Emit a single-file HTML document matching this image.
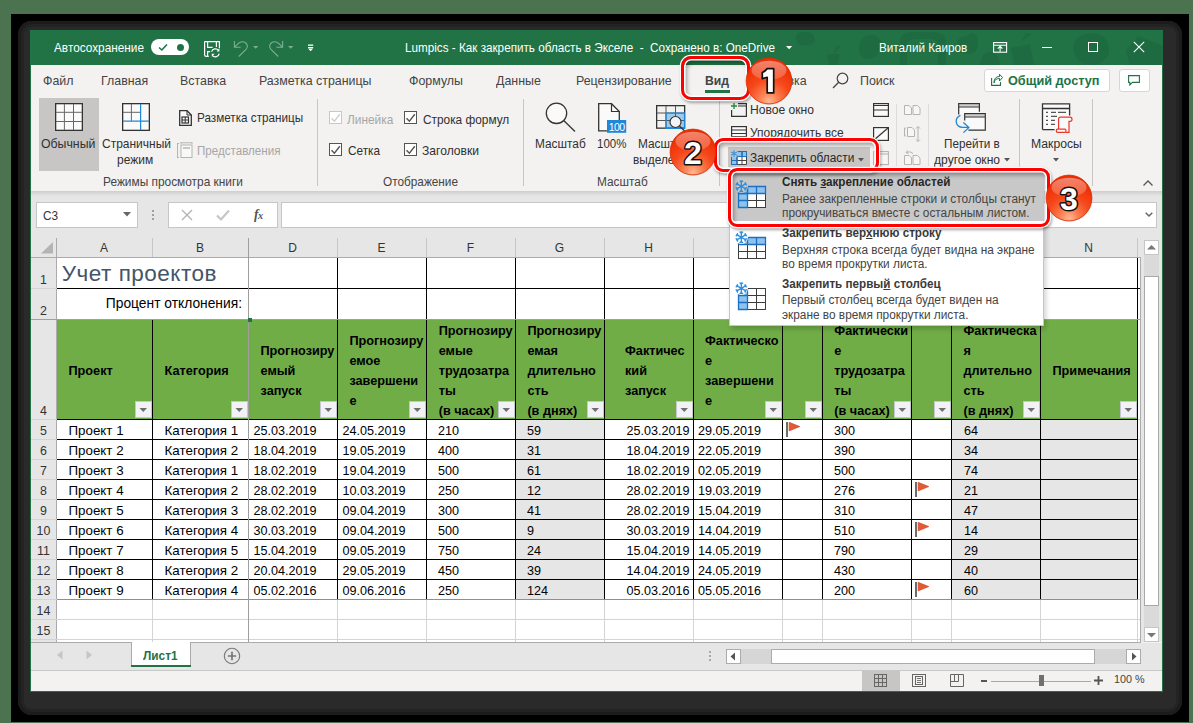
<!DOCTYPE html>
<html><head><meta charset="utf-8"><title>Excel</title>
<style>
*{margin:0;padding:0;box-sizing:border-box}
html,body{width:1193px;height:723px;overflow:hidden;background:#4b7350;font-family:"Liberation Sans",sans-serif}
.a{position:absolute}
.t{position:absolute;white-space:nowrap;line-height:1}
svg{overflow:visible}
</style></head><body>

<div class="a" style="left:11px;top:14px;width:1178px;height:708px;background:#000"></div>
<div class="a" style="left:18px;top:21px;width:1164px;height:694px;background:#2a2a2a;border-radius:14px;box-shadow:inset 0 0 0 3px #1c1c1c, inset 0 0 0 6px #232323"></div>
<div class="a" style="left:30px;top:30px;width:1133px;height:662px;background:#f3f2f1"></div>
<div class="a" style="left:30px;top:30px;width:1133px;height:35px;background:#217346"></div>
<div class="a" style="left:30px;top:65px;width:1px;height:627px;background:#217346"></div>
<div class="a" style="left:1162px;top:65px;width:1px;height:627px;background:#217346"></div>
<div class="a" style="left:30px;top:691px;width:1133px;height:1px;background:#217346"></div>
<svg class="a" style="left:780px;top:30px;" width="383" height="35" viewBox="0 0 383 35"><g fill="#1f6b41"><path d="M18 3Q30 0 34 6Q37 14 30 15Q20 17 17 12Q14 6 18 3Z"/><path d="M47 24H60L58 35H49Z M54 24L56 16L61 15" stroke="{PC}" stroke-width="1.5"/><path d="M80 12Q86 2 96 6Q104 10 100 20Q96 30 86 29Q76 26 80 12Z"/><path d="M120 35V14Q118 4 130 2H155Q168 4 166 14V35H158V14Q156 9 150 9H136Q128 9 127 14V35Z"/><path d="M186 6Q196 -1 198 10Q200 22 190 24Q178 25 177 14Q176 8 186 6Z"/><path d="M200 35Q202 22 210 22Q218 22 220 35Z"/><path d="M231 18L250 14L254 35H234Z M240 12L246 3L252 4" stroke="{PC}" stroke-width="1.5"/><path d="M300 6Q312 0 322 6Q332 14 328 26Q322 35 312 35Q300 35 295 25Q290 12 300 6Z"/><path d="M358 6L383 16V35H350L346 20Z"/></g></svg>
<div class="t" style="left:54px;top:41.81px;font-size:12.63px;color:#ffffff;transform:scaleX(0.9346);transform-origin:0 0;">Автосохранение</div>
<div class="a" style="left:151px;top:39px;width:38px;height:16px;background:#fff;border-radius:8px"></div>
<svg class="a" style="left:157px;top:42px;" width="12" height="10" viewBox="0 0 12 10"><path d="M2 5.5 L4.8 8 L10 2.5" fill="none" stroke="#217346" stroke-width="1.6"/></svg>
<div class="a" style="left:177px;top:44px;width:7px;height:7px;background:#217346;border-radius:50%"></div>
<div class="t" style="left:404.7px;top:41.90px;font-size:12.52px;color:#ffffff;transform:scaleX(0.9346);transform-origin:0 0;">Lumpics - Как закрепить область в Экселе&nbsp; -&nbsp; Сохранено в: OneDrive</div>
<div class="t" style="left:879px;top:41.90px;font-size:12.52px;color:#ffffff;transform:scaleX(0.9346);transform-origin:0 0;">Виталий Каиров</div>
<svg class="a" style="left:204px;top:41px;" width="16" height="16" viewBox="0 0 16 16"><path d="M0.6 0.6H15.4V7.2M0.6 0.6V13.8Q0.6 15.4 2.2 15.4H4.8M3.6 0.6V6.4H8.6M12.4 0.6V6M3.6 15.4V10.6H6.2" fill="none" stroke="#fff" stroke-width="1.2"/><path d="M7.6 10.6A4 4 0 0 1 14.6 9.4M15.2 12.6A4 4 0 0 1 8.4 14.6" fill="none" stroke="#fff" stroke-width="1.2"/><path d="M15.4 7.6V10.5H12.6Z M7.8 15.8V12.8H10.6Z" fill="#fff"/></svg>
<svg class="a" style="left:233px;top:40px;" width="16" height="17" viewBox="0 0 16 17"><path d="M1.4 1V7.3H7.6M1.4 7.3L4.8 3.9Q9 0 12.8 3Q15.8 6 13 9.5L5.8 16.5" fill="none" stroke="rgba(255,255,255,0.42)" stroke-width="1.1"/></svg>
<svg class="a" style="left:253px;top:46px;" width="6" height="3" viewBox="0 0 6 3"><path d="M0 0H5.4L2.7 2.8Z" fill="rgba(255,255,255,0.42)"/></svg>
<svg class="a" style="left:268px;top:40px;" width="16" height="17" viewBox="0 0 16 17"><path d="M14.6 1V7.3H8.4M14.6 7.3L11.2 3.9Q7 0 3.2 3Q0.2 6 3 9.5L10.2 16.5" fill="none" stroke="rgba(255,255,255,0.42)" stroke-width="1.1"/></svg>
<svg class="a" style="left:288px;top:46px;" width="6" height="3" viewBox="0 0 6 3"><path d="M0 0H5.4L2.7 2.8Z" fill="rgba(255,255,255,0.42)"/></svg>
<svg class="a" style="left:308px;top:44px;" width="6" height="8" viewBox="0 0 6 8"><rect x="0" y="0.5" width="5.2" height="1.3" fill="#fff"/><rect x="0" y="3" width="5.2" height="1.1" fill="#fff"/><path d="M0 4.6H5.2L2.6 7.2Z" fill="#fff"/></svg>
<svg class="a" style="left:786px;top:46px;" width="7" height="4" viewBox="0 0 7 4"><path d="M0 0H6.2L3.1 3.2Z" fill="#fff"/></svg>
<svg class="a" style="left:993px;top:41px;" width="15" height="12" viewBox="0 0 15 12"><rect x="0.6" y="1.6" width="13" height="9.6" fill="none" stroke="#fff" stroke-width="1.1"/><path d="M0.6 4.2H13.6M7.1 10.8V5.6M4.8 7.6L7.1 5.3L9.4 7.6" fill="none" stroke="#fff" stroke-width="1.1"/></svg>
<div class="a" style="left:1042px;top:47px;width:10px;height:1px;background:#fff"></div>
<div class="a" style="left:1088px;top:42px;width:10px;height:10px;border:1px solid #fff"></div>
<svg class="a" style="left:1133px;top:41px;" width="12" height="12" viewBox="0 0 12 12"><path d="M0.8 0.8L11.2 11.2M11.2 0.8L0.8 11.2" stroke="#fff" stroke-width="1.1"/></svg>
<div class="t" style="left:43.4px;top:74.07px;font-size:13.27px;color:#444;transform:scaleX(0.9346);transform-origin:0 0;">Файл</div>
<div class="t" style="left:101.2px;top:74.07px;font-size:13.27px;color:#444;transform:scaleX(0.9346);transform-origin:0 0;">Главная</div>
<div class="t" style="left:180.4px;top:74.07px;font-size:13.27px;color:#444;transform:scaleX(0.9346);transform-origin:0 0;">Вставка</div>
<div class="t" style="left:258.9px;top:74.07px;font-size:13.27px;color:#444;transform:scaleX(0.9346);transform-origin:0 0;">Разметка страницы</div>
<div class="t" style="left:408.5px;top:74.07px;font-size:13.27px;color:#444;transform:scaleX(0.9346);transform-origin:0 0;">Формулы</div>
<div class="t" style="left:496.2px;top:74.07px;font-size:13.27px;color:#444;transform:scaleX(0.9346);transform-origin:0 0;">Данные</div>
<div class="t" style="left:575.5px;top:74.07px;font-size:13.27px;color:#444;transform:scaleX(0.9346);transform-origin:0 0;">Рецензирование</div>
<div class="t" style="left:757.6px;top:74.07px;font-size:13.27px;color:#444;transform:scaleX(0.9346);transform-origin:0 0;">Справка</div>
<div class="t" style="left:860px;top:74.07px;font-size:13.27px;color:#444;transform:scaleX(0.9346);transform-origin:0 0;">Поиск</div>
<div class="t" style="left:705.4px;top:73.95px;font-size:13.05px;color:#444;font-weight:bold;transform:scaleX(0.9346);transform-origin:0 0;">Вид</div>
<div class="a" style="left:705px;top:90px;width:25px;height:3px;background:#217346"></div>
<div class="a" style="left:39px;top:98px;width:60px;height:73px;background:#c8c6c4"></div>
<div class="t" style="left:41.3px;top:137.36px;font-size:13.16px;color:#303030;transform:scaleX(0.9346);transform-origin:0 0;">Обычный</div>
<div class="t" style="left:101.7px;top:137.63px;font-size:12.84px;color:#303030;transform:scaleX(0.9346);transform-origin:0 0;">Страничный</div>
<div class="t" style="left:117.4px;top:154.43px;font-size:12.84px;color:#303030;transform:scaleX(0.9346);transform-origin:0 0;">режим</div>
<div class="t" style="left:196.5px;top:112.10px;font-size:12.52px;color:#303030;transform:scaleX(0.9346);transform-origin:0 0;">Разметка страницы</div>
<div class="t" style="left:196.5px;top:144.99px;font-size:12.41px;color:#a6a6a6;transform:scaleX(0.9346);transform-origin:0 0;">Представления</div>
<div class="t" style="left:103.4px;top:176.42px;font-size:12.73px;color:#444;transform:scaleX(0.9346);transform-origin:0 0;">Режимы просмотра книги</div>
<div class="t" style="left:347.4px;top:113.72px;font-size:12.73px;color:#a6a6a6;transform:scaleX(0.9346);transform-origin:0 0;">Линейка</div>
<div class="t" style="left:422.5px;top:113.77px;font-size:12.68px;color:#303030;transform:scaleX(0.9346);transform-origin:0 0;">Строка формул</div>
<div class="t" style="left:347.8px;top:145.01px;font-size:12.63px;color:#303030;transform:scaleX(0.9346);transform-origin:0 0;">Сетка</div>
<div class="t" style="left:422px;top:144.74px;font-size:12.95px;color:#303030;transform:scaleX(0.9346);transform-origin:0 0;">Заголовки</div>
<div class="t" style="left:382.5px;top:176.31px;font-size:12.63px;color:#444;transform:scaleX(0.9346);transform-origin:0 0;">Отображение</div>
<div class="t" style="left:534.8px;top:137.67px;font-size:12.68px;color:#303030;transform:scaleX(0.9346);transform-origin:0 0;">Масштаб</div>
<div class="t" style="left:596.5px;top:137.98px;font-size:12.31px;color:#303030;transform:scaleX(0.9346);transform-origin:0 0;">100%</div>
<div class="t" style="left:637.6px;top:137.67px;font-size:12.68px;color:#303030;transform:scaleX(0.9346);transform-origin:0 0;">Масштаб по</div>
<div class="t" style="left:633.4px;top:154.27px;font-size:12.68px;color:#303030;transform:scaleX(0.9346);transform-origin:0 0;">выделенному</div>
<div class="t" style="left:597.4px;top:176.27px;font-size:12.68px;color:#444;transform:scaleX(0.9346);transform-origin:0 0;">Масштаб</div>
<div class="t" style="left:750.4px;top:104.24px;font-size:12.95px;color:#303030;transform:scaleX(0.9346);transform-origin:0 0;">Новое окно</div>
<div class="t" style="left:750.4px;top:126.93px;font-size:12.84px;color:#303030;transform:scaleX(0.9346);transform-origin:0 0;">Упорядочить все</div>
<div class="t" style="left:944.1px;top:137.70px;font-size:12.52px;color:#303030;transform:scaleX(0.9346);transform-origin:0 0;">Перейти в</div>
<div class="t" style="left:934px;top:153.64px;font-size:12.95px;color:#303030;transform:scaleX(0.9346);transform-origin:0 0;">другое окно</div>
<div class="t" style="left:1030.6px;top:137.35px;font-size:13.05px;color:#303030;transform:scaleX(0.9346);transform-origin:0 0;">Макросы</div>
<div class="a" style="left:317px;top:99px;width:1px;height:87px;background:#c8c6c4"></div>
<div class="a" style="left:523px;top:99px;width:1px;height:87px;background:#c8c6c4"></div>
<div class="a" style="left:719px;top:99px;width:1px;height:87px;background:#c8c6c4"></div>
<div class="a" style="left:1019px;top:99px;width:1px;height:87px;background:#c8c6c4"></div>
<div class="a" style="left:1092px;top:99px;width:1px;height:87px;background:#c8c6c4"></div>
<div class="a" style="left:896px;top:104px;width:1px;height:62px;background:#dcdcdc"></div>
<div class="a" style="left:928px;top:104px;width:1px;height:62px;background:#dcdcdc"></div>
<div class="a" style="left:31px;top:191px;width:1131px;height:47px;background:#e6e6e6"></div>
<div class="a" style="left:31px;top:191px;width:1131px;height:5px;background:linear-gradient(#cecece,#e6e6e6)"></div>
<svg class="a" style="left:55px;top:103px;" width="28" height="28" viewBox="0 0 28 28"><rect x="0.65" y="0.65" width="26.7" height="26.7" fill="#fafafa" stroke="#333" stroke-width="1.3"/><path d="M9.4 1V27M18.5 1V27M1 9.3H27M1 18.5H27" stroke="#666" stroke-width="1"/></svg>
<svg class="a" style="left:122px;top:103px;" width="28" height="28" viewBox="0 0 28 28"><rect x="0.65" y="0.65" width="26.7" height="26.7" fill="#fafafa" stroke="#333" stroke-width="1.3"/><path d="M9.4 1V18.2M1 9.3H18.6" stroke="#666" stroke-width="1"/><path d="M18.6 1V27M1 18.2H27" stroke="#1e88d8" stroke-width="1.2"/></svg>
<svg class="a" style="left:179px;top:110px;" width="13" height="16" viewBox="0 0 13 16"><path d="M0.7 0.7H8L12.3 5V15.3H0.7Z" fill="#fafafa" stroke="#333" stroke-width="1.3"/><path d="M8 0.7V5H12.3" fill="none" stroke="#333" stroke-width="1"/><rect x="3" y="7" width="6.5" height="6" fill="none" stroke="#333" stroke-width="1.2"/><path d="M6.2 7V13M3 10H9.5" stroke="#333" stroke-width="1"/></svg>
<svg class="a" style="left:177px;top:142px;" width="16" height="16" viewBox="0 0 16 16"><path d="M0.5 1.5V15.5M0 1.5H2M0 15.5H2" stroke="#b4b4b4" stroke-width="1"/><path d="M4 0.8H15M4 0V2M15 0V2" stroke="#b4b4b4" stroke-width="1"/><rect x="4" y="3" width="11" height="12.5" fill="#f8f8f8" stroke="#b4b4b4" stroke-width="1"/><rect x="6" y="5" width="7" height="2" fill="#c8c8c8"/></svg>
<svg class="a" style="left:329px;top:111px;" width="13" height="13" viewBox="0 0 13 13"><rect x="0.5" y="0.5" width="12" height="12" fill="#fff" stroke="#c8c8c8" stroke-width="1"/><path d="M2.5 7.2L5.4 10.2L10.8 3.2" fill="none" stroke="#cfcfcf" stroke-width="1.4"/></svg>
<svg class="a" style="left:404px;top:111px;" width="13" height="13" viewBox="0 0 13 13"><rect x="0.5" y="0.5" width="12" height="12" fill="#fff" stroke="#555" stroke-width="1"/><path d="M2.5 7.2L5.4 10.2L10.8 3.2" fill="none" stroke="#555" stroke-width="1.4"/></svg>
<svg class="a" style="left:329px;top:143px;" width="13" height="13" viewBox="0 0 13 13"><rect x="0.5" y="0.5" width="12" height="12" fill="#fff" stroke="#555" stroke-width="1"/><path d="M2.5 7.2L5.4 10.2L10.8 3.2" fill="none" stroke="#555" stroke-width="1.4"/></svg>
<svg class="a" style="left:404px;top:143px;" width="13" height="13" viewBox="0 0 13 13"><rect x="0.5" y="0.5" width="12" height="12" fill="#fff" stroke="#555" stroke-width="1"/><path d="M2.5 7.2L5.4 10.2L10.8 3.2" fill="none" stroke="#555" stroke-width="1.4"/></svg>
<svg class="a" style="left:545px;top:103px;" width="31" height="29" viewBox="0 0 31 29"><circle cx="11.5" cy="10.3" r="10.2" fill="#fafafa" stroke="#333" stroke-width="1.3"/><path d="M18.7 17.5L30 28.5" stroke="#333" stroke-width="1.3"/></svg>
<svg class="a" style="left:598px;top:103px;" width="29" height="30" viewBox="0 0 29 30"><path d="M0.7 0.7H13.5L21.3 8.5V27.8H0.7Z" fill="#fafafa" stroke="#333" stroke-width="1.3"/><path d="M13.5 0.7V8.5H21.3" fill="none" stroke="#333" stroke-width="1.2"/><rect x="9" y="17" width="19.2" height="12.8" fill="#1e88d8"/><text x="18.6" y="27.6" font-size="10.5" font-family="Liberation Sans" fill="#fff" text-anchor="middle" letter-spacing="-0.6">100</text></svg>
<svg class="a" style="left:656px;top:105px;" width="32" height="29" viewBox="0 0 32 29"><rect x="10" y="8" width="18.5" height="15.5" fill="#9ccbf0"/><rect x="0.65" y="0.65" width="28" height="22.5" fill="none" stroke="#333" stroke-width="1.3"/><path d="M10 1V23M19.5 1V23M1 8H28.5M1 15.5H28.5" stroke="#555" stroke-width="1"/><path d="M10 8V23.5H28.5V8Z" fill="none" stroke="#1e88d8" stroke-width="1.2"/><circle cx="19.5" cy="17" r="5.5" fill="#f4f4f4" stroke="#333" stroke-width="1.2"/><path d="M23.5 21L30 27.5" stroke="#333" stroke-width="1.3"/></svg>
<svg class="a" style="left:731px;top:103px;" width="16" height="14" viewBox="0 0 16 14"><path d="M7 0.6H15.4V13.4H0.6V7" fill="none" stroke="#333" stroke-width="1.2"/><path d="M7 3H15.4" stroke="#333" stroke-width="1"/><path d="M3 0V6M0 3H6" stroke="#1f8a3a" stroke-width="1.3"/></svg>
<svg class="a" style="left:731px;top:126px;" width="16" height="14" viewBox="0 0 16 14"><rect x="0.6" y="0.6" width="14.8" height="13" fill="#fafafa" stroke="#333" stroke-width="1.2"/><path d="M1 4H15M1 7.5H15M1 10.5H15" stroke="#333" stroke-width="1"/></svg>
<svg class="a" style="left:873px;top:103px;" width="16" height="14" viewBox="0 0 16 14"><rect x="0.6" y="0.6" width="14.8" height="12.8" fill="#fafafa" stroke="#333" stroke-width="1.2"/><path d="M1 2.5H15M1 7H15" stroke="#333" stroke-width="1"/></svg>
<svg class="a" style="left:873px;top:127px;" width="16" height="14" viewBox="0 0 16 14"><rect x="0.6" y="0.6" width="14.8" height="12.8" fill="#fafafa" stroke="#333" stroke-width="1.2"/><path d="M1 13L15 1" stroke="#333" stroke-width="1.2"/></svg>
<svg class="a" style="left:873px;top:151px;" width="16" height="14" viewBox="0 0 16 14"><rect x="0.6" y="0.6" width="14.8" height="13" fill="#f6f6f6" stroke="#b0b0b0" stroke-width="1"/><path d="M1 3H15" stroke="#b0b0b0" stroke-width="1"/></svg>
<svg class="a" style="left:904px;top:105px;" width="17" height="10" viewBox="0 0 17 10"><path d="M0.5 0.5H5L7.5 3V9.5H0.5Z M9 0.5H13.5L16 3V9.5H9Z" fill="#f6f6f6" stroke="#b4b4b4" stroke-width="1"/></svg>
<svg class="a" style="left:904px;top:126px;" width="17" height="16" viewBox="0 0 17 16"><path d="M2 2H0.5V10H2" fill="none" stroke="#b4b4b4" stroke-width="1"/><path d="M3.5 1.5H8L10.5 4V10.5H3.5Z" fill="#f6f6f6" stroke="#b4b4b4" stroke-width="1"/><path d="M14 0.5V15.5M12 2.5L14 0.5L16 2.5M12 13.5L14 15.5L16 13.5" fill="none" stroke="#b4b4b4" stroke-width="1"/></svg>
<svg class="a" style="left:904px;top:150px;" width="17" height="15" viewBox="0 0 17 15"><path d="M0.5 5.5H5L7.5 8V14.5H0.5Z M9 5.5H13.5L16 8V14.5H9Z" fill="#f6f6f6" stroke="#b4b4b4" stroke-width="1"/><path d="M9 3.5Q6 0.5 2 2.5M2 2.5L3.5 0.5M2 2.5L4.5 3.5" fill="none" stroke="#b4b4b4" stroke-width="1"/></svg>
<svg class="a" style="left:950px;top:100px;" width="40" height="36" viewBox="0 0 40 36"><rect x="9.3" y="4.3" width="19.5" height="10" fill="#fafafa"/><rect x="9.3" y="4.3" width="19.5" height="2.4" fill="#cfcfcf"/><path d="M8.7 14.4V3.7H29.4V11.7M8.7 7H29.4" fill="none" stroke="#333" stroke-width="1.2"/><rect x="15.3" y="14.3" width="19.5" height="15.5" fill="#fafafa"/><rect x="15.3" y="14.3" width="19.5" height="2.4" fill="#cfcfcf"/><path d="M14.7 20.4V13.7H35.3V30.1H18.4M14.7 17H35.3" fill="none" stroke="#333" stroke-width="1.2"/><path d="M10.4 15.4Q6 17.5 6.2 21.4Q6.5 27.4 13 27.4H18.9M13.4 22.4L18.9 27.4L13.4 32.6" fill="none" stroke="#1e88d8" stroke-width="1.3"/></svg>
<svg class="a" style="left:1041px;top:103px;" width="33" height="31" viewBox="0 0 33 31"><rect x="1.5" y="0.9" width="27" height="25.7" fill="#fafafa"/><path d="M1.5 26.6V0.9H28.6V12.6M1.5 26.6H13.5M1.5 5.5H28.6" fill="none" stroke="#333" stroke-width="1.3"/><path d="M5 9.4H7M10 9.4H15M17 9.4H25M5 13.4H7M10 13.4H16M5 17.4H7M10 17.4H14M5 21.4H7M10 21.4H14" stroke="#555" stroke-width="1.1"/><path d="M17.6 29.3V16.2Q17.6 14.2 19.6 14.2H29Q31 14.2 31 16.3Q31 18.4 29 18.4H28V29.3H24.9" fill="#fafafa" stroke="#e8372c" stroke-width="1.2"/><rect x="15.4" y="26.1" width="9.5" height="3.2" rx="1" fill="#fafafa" stroke="#e8372c" stroke-width="1.2"/></svg>
<svg class="a" style="left:1004px;top:158px;" width="6" height="4" viewBox="0 0 6 4"><path d="M0 0H6L3 3.5Z" fill="#555"/></svg>
<svg class="a" style="left:1053px;top:158px;" width="6" height="4" viewBox="0 0 6 4"><path d="M0 0H6L3 3.5Z" fill="#555"/></svg>
<svg class="a" style="left:832px;top:72px;" width="17" height="17" viewBox="0 0 17 17"><circle cx="10.5" cy="6.5" r="5.3" fill="none" stroke="#444" stroke-width="1.2"/><path d="M6.7 10.3L1 16" stroke="#444" stroke-width="1.3"/></svg>
<div class="a" style="left:983.5px;top:68.5px;width:126px;height:23px;background:#fff;border:1px solid #d6d6d6;border-radius:3px"></div>
<svg class="a" style="left:991px;top:74px;" width="12" height="12" viewBox="0 0 12 12"><path d="M0.6 4V11.4H9.5V8" fill="none" stroke="#217346" stroke-width="1.1"/><path d="M3 9Q3.5 4.5 8.5 4.5V7L11.5 3.5L8.5 0.3V2.5Q3 2.5 3 9Z" fill="none" stroke="#217346" stroke-width="1"/></svg>
<div class="t" style="left:1007.6px;top:73.50px;font-size:13.59px;color:#217346;font-weight:bold;transform:scaleX(0.9346);transform-origin:0 0;">Общий доступ</div>
<div class="a" style="left:1118.5px;top:68.5px;width:31px;height:23px;background:#fff;border:1px solid #d6d6d6;border-radius:3px"></div>
<svg class="a" style="left:1128px;top:75px;" width="12" height="11" viewBox="0 0 12 11"><path d="M0.6 0.6H11.4V7.4H4.5L1.8 10V7.4H0.6Z" fill="none" stroke="#217346" stroke-width="1.1"/></svg>
<svg class="a" style="left:1143px;top:180px;" width="10" height="6" viewBox="0 0 10 6"><path d="M0.5 5.5L5 1L9.5 5.5" fill="none" stroke="#555" stroke-width="1.3"/></svg>
<div class="a" style="left:36px;top:202px;width:102px;height:26px;background:#fff;border:1px solid #c6c6c6"></div>
<div class="t" style="left:43.4px;top:209.81px;font-size:12.63px;color:#333;transform:scaleX(0.9346);transform-origin:0 0;">C3</div>
<svg class="a" style="left:123px;top:212px;" width="8" height="5" viewBox="0 0 8 5"><path d="M0 0H8L4 4.5Z" fill="#666"/></svg>
<div class="a" style="left:152px;top:210px;width:2px;height:2px;background:#a0a0a0"></div>
<div class="a" style="left:152px;top:214px;width:2px;height:2px;background:#a0a0a0"></div>
<div class="a" style="left:152px;top:218px;width:2px;height:2px;background:#a0a0a0"></div>
<div class="a" style="left:168px;top:202px;width:110px;height:26px;background:#fff;border:1px solid #c6c6c6"></div>
<svg class="a" style="left:181px;top:209px;" width="12" height="12" viewBox="0 0 12 12"><path d="M1 1L11 11M11 1L1 11" stroke="#b4b4b4" stroke-width="1.4"/></svg>
<svg class="a" style="left:216px;top:209px;" width="14" height="12" viewBox="0 0 14 12"><path d="M1 6.5L5 10.5L13 1.5" fill="none" stroke="#c6c6c6" stroke-width="2.2"/></svg>
<div class="t" style="left:253.5px;top:206.77px;font-size:14.45px;color:#555;transform:scaleX(0.9346);transform-origin:0 0;font-family:'Liberation Serif',serif;font-weight:bold"><i>f</i><i style="font-size:11px;margin-left:-0.5px">x</i></div>
<div class="a" style="left:281px;top:202px;width:876px;height:26px;background:#fff;border:1px solid #c6c6c6"></div>
<svg class="a" style="left:1145px;top:212px;" width="8" height="5" viewBox="0 0 8 5"><path d="M0.7 0.7L4 4L7.3 0.7" fill="none" stroke="#666" stroke-width="1.5"/></svg>
<div class="a" style="left:31px;top:238px;width:1131px;height:404px;background:#e6e6e6"></div>
<div class="a" style="left:57px;top:258px;width:1083px;height:384px;background:#fff"></div>
<div class="a" style="left:152px;top:238px;width:1px;height:19px;background:#c6c6c6"></div>
<div class="a" style="left:248px;top:238px;width:1px;height:19px;background:#c6c6c6"></div>
<div class="a" style="left:337px;top:238px;width:1px;height:19px;background:#c6c6c6"></div>
<div class="a" style="left:426px;top:238px;width:1px;height:19px;background:#c6c6c6"></div>
<div class="a" style="left:515px;top:238px;width:1px;height:19px;background:#c6c6c6"></div>
<div class="a" style="left:604px;top:238px;width:1px;height:19px;background:#c6c6c6"></div>
<div class="a" style="left:693px;top:238px;width:1px;height:19px;background:#c6c6c6"></div>
<div class="a" style="left:782px;top:238px;width:1px;height:19px;background:#c6c6c6"></div>
<div class="a" style="left:822px;top:238px;width:1px;height:19px;background:#c6c6c6"></div>
<div class="a" style="left:911px;top:238px;width:1px;height:19px;background:#c6c6c6"></div>
<div class="a" style="left:951px;top:238px;width:1px;height:19px;background:#c6c6c6"></div>
<div class="a" style="left:1040px;top:238px;width:1px;height:19px;background:#c6c6c6"></div>
<div class="a" style="left:1137px;top:238px;width:1px;height:19px;background:#c6c6c6"></div>
<div class="t" style="left:56px;width:96px;text-align:center;top:241.64px;font-size:12px;color:#333">A</div>
<div class="t" style="left:152px;width:96px;text-align:center;top:241.64px;font-size:12px;color:#333">B</div>
<div class="t" style="left:248px;width:89px;text-align:center;top:241.64px;font-size:12px;color:#333">D</div>
<div class="t" style="left:337px;width:89px;text-align:center;top:241.64px;font-size:12px;color:#333">E</div>
<div class="t" style="left:426px;width:89px;text-align:center;top:241.64px;font-size:12px;color:#333">F</div>
<div class="t" style="left:515px;width:89px;text-align:center;top:241.64px;font-size:12px;color:#333">G</div>
<div class="t" style="left:604px;width:89px;text-align:center;top:241.64px;font-size:12px;color:#333">H</div>
<div class="t" style="left:693px;width:89px;text-align:center;top:241.64px;font-size:12px;color:#333">I</div>
<div class="t" style="left:782px;width:40px;text-align:center;top:241.64px;font-size:12px;color:#333">J</div>
<div class="t" style="left:822px;width:89px;text-align:center;top:241.64px;font-size:12px;color:#333">K</div>
<div class="t" style="left:911px;width:40px;text-align:center;top:241.64px;font-size:12px;color:#333">L</div>
<div class="t" style="left:951px;width:89px;text-align:center;top:241.64px;font-size:12px;color:#333">M</div>
<div class="t" style="left:1040px;width:97px;text-align:center;top:241.64px;font-size:12px;color:#333">N</div>
<div class="a" style="left:31px;top:257px;width:1109px;height:1px;background:#ababab"></div>
<div class="a" style="left:56px;top:238px;width:1px;height:404px;background:#ababab"></div>
<svg class="a" style="left:41px;top:242px;" width="13" height="12" viewBox="0 0 13 12"><path d="M12 0V11.5H0Z" fill="#b4b4b4"/></svg>
<div class="a" style="left:31px;top:288px;width:1109px;height:1px;background:#d4d4d4"></div>
<div class="a" style="left:31px;top:319px;width:1109px;height:1px;background:#d4d4d4"></div>
<div class="a" style="left:31px;top:419px;width:1109px;height:1px;background:#d4d4d4"></div>
<div class="a" style="left:31px;top:439px;width:1109px;height:1px;background:#d4d4d4"></div>
<div class="a" style="left:31px;top:459px;width:1109px;height:1px;background:#d4d4d4"></div>
<div class="a" style="left:31px;top:479px;width:1109px;height:1px;background:#d4d4d4"></div>
<div class="a" style="left:31px;top:499px;width:1109px;height:1px;background:#d4d4d4"></div>
<div class="a" style="left:31px;top:519px;width:1109px;height:1px;background:#d4d4d4"></div>
<div class="a" style="left:31px;top:539px;width:1109px;height:1px;background:#d4d4d4"></div>
<div class="a" style="left:31px;top:559px;width:1109px;height:1px;background:#d4d4d4"></div>
<div class="a" style="left:31px;top:579px;width:1109px;height:1px;background:#d4d4d4"></div>
<div class="a" style="left:31px;top:599px;width:1109px;height:1px;background:#d4d4d4"></div>
<div class="a" style="left:31px;top:619px;width:1109px;height:1px;background:#d4d4d4"></div>
<div class="a" style="left:31px;top:639px;width:1109px;height:1px;background:#d4d4d4"></div>
<div class="a" style="left:152px;top:258px;width:1px;height:384px;background:#d4d4d4"></div>
<div class="a" style="left:248px;top:258px;width:1px;height:384px;background:#d4d4d4"></div>
<div class="a" style="left:337px;top:258px;width:1px;height:384px;background:#d4d4d4"></div>
<div class="a" style="left:426px;top:258px;width:1px;height:384px;background:#d4d4d4"></div>
<div class="a" style="left:515px;top:258px;width:1px;height:384px;background:#d4d4d4"></div>
<div class="a" style="left:604px;top:258px;width:1px;height:384px;background:#d4d4d4"></div>
<div class="a" style="left:693px;top:258px;width:1px;height:384px;background:#d4d4d4"></div>
<div class="a" style="left:782px;top:258px;width:1px;height:384px;background:#d4d4d4"></div>
<div class="a" style="left:822px;top:258px;width:1px;height:384px;background:#d4d4d4"></div>
<div class="a" style="left:911px;top:258px;width:1px;height:384px;background:#d4d4d4"></div>
<div class="a" style="left:951px;top:258px;width:1px;height:384px;background:#d4d4d4"></div>
<div class="a" style="left:1040px;top:258px;width:1px;height:384px;background:#d4d4d4"></div>
<div class="a" style="left:1137px;top:258px;width:1px;height:384px;background:#d4d4d4"></div>
<div class="a" style="left:516px;top:420px;width:88px;height:179px;background:#e7e6e6"></div>
<div class="a" style="left:952px;top:420px;width:88px;height:179px;background:#e7e6e6"></div>
<div class="a" style="left:1041px;top:420px;width:96px;height:179px;background:#e7e6e6"></div>
<div class="a" style="left:57px;top:320px;width:1080px;height:99px;background:#70ad47"></div>
<div class="a" style="left:57px;top:258px;width:191px;height:30px;background:#fff"></div>
<div class="a" style="left:57px;top:289px;width:191px;height:30px;background:#fff"></div>
<div class="a" style="left:248px;top:258px;width:1px;height:61px;background:#000"></div>
<div class="a" style="left:337px;top:258px;width:1px;height:61px;background:#000"></div>
<div class="a" style="left:426px;top:258px;width:1px;height:61px;background:#000"></div>
<div class="a" style="left:515px;top:258px;width:1px;height:61px;background:#000"></div>
<div class="a" style="left:604px;top:258px;width:1px;height:61px;background:#000"></div>
<div class="a" style="left:693px;top:258px;width:1px;height:61px;background:#000"></div>
<div class="a" style="left:782px;top:258px;width:1px;height:61px;background:#000"></div>
<div class="a" style="left:822px;top:258px;width:1px;height:61px;background:#000"></div>
<div class="a" style="left:911px;top:258px;width:1px;height:61px;background:#000"></div>
<div class="a" style="left:951px;top:258px;width:1px;height:61px;background:#000"></div>
<div class="a" style="left:1040px;top:258px;width:1px;height:61px;background:#000"></div>
<div class="a" style="left:1137px;top:258px;width:1px;height:61px;background:#000"></div>
<div class="a" style="left:57px;top:288px;width:1083px;height:1px;background:#000"></div>
<div class="a" style="left:152px;top:320px;width:1px;height:279px;background:#000"></div>
<div class="a" style="left:248px;top:320px;width:1px;height:279px;background:#000"></div>
<div class="a" style="left:337px;top:320px;width:1px;height:279px;background:#000"></div>
<div class="a" style="left:426px;top:320px;width:1px;height:279px;background:#000"></div>
<div class="a" style="left:515px;top:320px;width:1px;height:279px;background:#000"></div>
<div class="a" style="left:604px;top:320px;width:1px;height:279px;background:#000"></div>
<div class="a" style="left:693px;top:320px;width:1px;height:279px;background:#000"></div>
<div class="a" style="left:782px;top:320px;width:1px;height:279px;background:#000"></div>
<div class="a" style="left:822px;top:320px;width:1px;height:279px;background:#000"></div>
<div class="a" style="left:911px;top:320px;width:1px;height:279px;background:#000"></div>
<div class="a" style="left:951px;top:320px;width:1px;height:279px;background:#000"></div>
<div class="a" style="left:1040px;top:320px;width:1px;height:279px;background:#000"></div>
<div class="a" style="left:1137px;top:320px;width:1px;height:279px;background:#000"></div>
<div class="a" style="left:57px;top:419px;width:1080px;height:1px;background:#000"></div>
<div class="a" style="left:57px;top:439px;width:1080px;height:1px;background:#000"></div>
<div class="a" style="left:57px;top:459px;width:1080px;height:1px;background:#000"></div>
<div class="a" style="left:57px;top:479px;width:1080px;height:1px;background:#000"></div>
<div class="a" style="left:57px;top:499px;width:1080px;height:1px;background:#000"></div>
<div class="a" style="left:57px;top:519px;width:1080px;height:1px;background:#000"></div>
<div class="a" style="left:57px;top:539px;width:1080px;height:1px;background:#000"></div>
<div class="a" style="left:57px;top:559px;width:1080px;height:1px;background:#000"></div>
<div class="a" style="left:57px;top:579px;width:1080px;height:1px;background:#000"></div>
<div class="a" style="left:57px;top:599px;width:1081px;height:1px;background:#70ad47"></div>
<div class="a" style="left:1140px;top:257px;width:1px;height:385px;background:#ababab"></div>
<div class="a" style="left:31px;top:642px;width:1110px;height:1px;background:#ababab"></div>
<div class="a" style="left:248px;top:238px;width:1px;height:404px;background:#9e9e9e"></div>
<div class="a" style="left:31px;top:319px;width:1109px;height:1px;background:#a0a0a0"></div>
<div class="a" style="left:248px;top:318px;width:4px;height:4px;background:#217346"></div>
<div class="t" style="left:31px;width:25px;text-align:center;top:273.90px;font-size:12.4px;color:#333">1</div>
<div class="t" style="left:31px;width:25px;text-align:center;top:304.90px;font-size:12.4px;color:#333">2</div>
<div class="t" style="left:31px;width:25px;text-align:center;top:404.90px;font-size:12.4px;color:#333">4</div>
<div class="t" style="left:31px;width:25px;text-align:center;top:424.90px;font-size:12.4px;color:#333">5</div>
<div class="t" style="left:31px;width:25px;text-align:center;top:444.90px;font-size:12.4px;color:#333">6</div>
<div class="t" style="left:31px;width:25px;text-align:center;top:464.90px;font-size:12.4px;color:#333">7</div>
<div class="t" style="left:31px;width:25px;text-align:center;top:484.90px;font-size:12.4px;color:#333">8</div>
<div class="t" style="left:31px;width:25px;text-align:center;top:504.90px;font-size:12.4px;color:#333">9</div>
<div class="t" style="left:31px;width:25px;text-align:center;top:524.90px;font-size:12.4px;color:#333">10</div>
<div class="t" style="left:31px;width:25px;text-align:center;top:544.90px;font-size:12.4px;color:#333">11</div>
<div class="t" style="left:31px;width:25px;text-align:center;top:564.90px;font-size:12.4px;color:#333">12</div>
<div class="t" style="left:31px;width:25px;text-align:center;top:584.90px;font-size:12.4px;color:#333">13</div>
<div class="t" style="left:31px;width:25px;text-align:center;top:604.90px;font-size:12.4px;color:#333">14</div>
<div class="t" style="left:31px;width:25px;text-align:center;top:624.90px;font-size:12.4px;color:#333">15</div>
<div class="t" style="left:61.8px;top:262.95px;font-size:22.50px;color:#44546a;letter-spacing:0.5px">Учет проектов</div>
<div class="t" style="left:57px;width:185px;text-align:right;top:297.32px;font-size:13.8px;color:#000">Процент отклонения:</div>
<div class="t" style="left:68.5px;top:364.65px;font-size:12.70px;color:#000;font-weight:bold;">Проект</div>
<div class="t" style="left:164.6px;top:364.65px;font-size:12.70px;color:#000;font-weight:bold;">Категория</div>
<div class="t" style="left:260.5px;top:344.65px;font-size:12.70px;color:#000;font-weight:bold;">Прогнозиру</div>
<div class="t" style="left:260.5px;top:364.65px;font-size:12.70px;color:#000;font-weight:bold;">емый</div>
<div class="t" style="left:260.5px;top:384.65px;font-size:12.70px;color:#000;font-weight:bold;">запуск</div>
<div class="t" style="left:349.4px;top:334.65px;font-size:12.70px;color:#000;font-weight:bold;">Прогнозиру</div>
<div class="t" style="left:349.4px;top:354.65px;font-size:12.70px;color:#000;font-weight:bold;">емое</div>
<div class="t" style="left:349.4px;top:374.65px;font-size:12.70px;color:#000;font-weight:bold;">завершени</div>
<div class="t" style="left:349.4px;top:394.65px;font-size:12.70px;color:#000;font-weight:bold;">е</div>
<div class="t" style="left:438.7px;top:324.65px;font-size:12.70px;color:#000;font-weight:bold;">Прогнозиру</div>
<div class="t" style="left:438.7px;top:344.65px;font-size:12.70px;color:#000;font-weight:bold;">емые</div>
<div class="t" style="left:438.7px;top:364.65px;font-size:12.70px;color:#000;font-weight:bold;">трудозатра</div>
<div class="t" style="left:438.7px;top:384.65px;font-size:12.70px;color:#000;font-weight:bold;">ты</div>
<div class="t" style="left:438.7px;top:404.65px;font-size:12.70px;color:#000;font-weight:bold;">(в часах)</div>
<div class="t" style="left:527.4px;top:324.65px;font-size:12.70px;color:#000;font-weight:bold;">Прогнозиру</div>
<div class="t" style="left:527.4px;top:344.65px;font-size:12.70px;color:#000;font-weight:bold;">емая</div>
<div class="t" style="left:527.4px;top:364.65px;font-size:12.70px;color:#000;font-weight:bold;">длительно</div>
<div class="t" style="left:527.4px;top:384.65px;font-size:12.70px;color:#000;font-weight:bold;">сть</div>
<div class="t" style="left:527.4px;top:404.65px;font-size:12.70px;color:#000;font-weight:bold;">(в днях)</div>
<div class="t" style="left:625px;top:344.65px;font-size:12.70px;color:#000;font-weight:bold;">Фактичес</div>
<div class="t" style="left:625px;top:364.65px;font-size:12.70px;color:#000;font-weight:bold;">кий</div>
<div class="t" style="left:625px;top:384.65px;font-size:12.70px;color:#000;font-weight:bold;">запуск</div>
<div class="t" style="left:705px;top:334.65px;font-size:12.70px;color:#000;font-weight:bold;">Фактическо</div>
<div class="t" style="left:705px;top:354.65px;font-size:12.70px;color:#000;font-weight:bold;">е</div>
<div class="t" style="left:705px;top:374.65px;font-size:12.70px;color:#000;font-weight:bold;">завершени</div>
<div class="t" style="left:705px;top:394.65px;font-size:12.70px;color:#000;font-weight:bold;">е</div>
<div class="t" style="left:834.3px;top:324.65px;font-size:12.70px;color:#000;font-weight:bold;">Фактически</div>
<div class="t" style="left:834.3px;top:344.65px;font-size:12.70px;color:#000;font-weight:bold;">е</div>
<div class="t" style="left:834.3px;top:364.65px;font-size:12.70px;color:#000;font-weight:bold;">трудозатра</div>
<div class="t" style="left:834.3px;top:384.65px;font-size:12.70px;color:#000;font-weight:bold;">ты</div>
<div class="t" style="left:834.3px;top:404.65px;font-size:12.70px;color:#000;font-weight:bold;">(в часах)</div>
<div class="t" style="left:963.5px;top:324.65px;font-size:12.70px;color:#000;font-weight:bold;">Фактическа</div>
<div class="t" style="left:963.5px;top:344.65px;font-size:12.70px;color:#000;font-weight:bold;">я</div>
<div class="t" style="left:963.5px;top:364.65px;font-size:12.70px;color:#000;font-weight:bold;">длительно</div>
<div class="t" style="left:963.5px;top:384.65px;font-size:12.70px;color:#000;font-weight:bold;">сть</div>
<div class="t" style="left:963.5px;top:404.65px;font-size:12.70px;color:#000;font-weight:bold;">(в днях)</div>
<div class="t" style="left:1052.5px;top:364.65px;font-size:12.70px;color:#000;font-weight:bold;">Примечания</div>
<svg class="a" style="left:135px;top:401px;" width="17" height="17" viewBox="0 0 17 17"><rect x="0.5" y="0.5" width="16" height="16" fill="#f2f2f6" stroke="#c6c6d2" stroke-width="1"/><path d="M4.5 7H12L8.25 11Z" fill="#6e6e6e"/></svg>
<svg class="a" style="left:231px;top:401px;" width="17" height="17" viewBox="0 0 17 17"><rect x="0.5" y="0.5" width="16" height="16" fill="#f2f2f6" stroke="#c6c6d2" stroke-width="1"/><path d="M4.5 7H12L8.25 11Z" fill="#6e6e6e"/></svg>
<svg class="a" style="left:320px;top:401px;" width="17" height="17" viewBox="0 0 17 17"><rect x="0.5" y="0.5" width="16" height="16" fill="#f2f2f6" stroke="#c6c6d2" stroke-width="1"/><path d="M4.5 7H12L8.25 11Z" fill="#6e6e6e"/></svg>
<svg class="a" style="left:409px;top:401px;" width="17" height="17" viewBox="0 0 17 17"><rect x="0.5" y="0.5" width="16" height="16" fill="#f2f2f6" stroke="#c6c6d2" stroke-width="1"/><path d="M4.5 7H12L8.25 11Z" fill="#6e6e6e"/></svg>
<svg class="a" style="left:498px;top:401px;" width="17" height="17" viewBox="0 0 17 17"><rect x="0.5" y="0.5" width="16" height="16" fill="#f2f2f6" stroke="#c6c6d2" stroke-width="1"/><path d="M4.5 7H12L8.25 11Z" fill="#6e6e6e"/></svg>
<svg class="a" style="left:587px;top:401px;" width="17" height="17" viewBox="0 0 17 17"><rect x="0.5" y="0.5" width="16" height="16" fill="#f2f2f6" stroke="#c6c6d2" stroke-width="1"/><path d="M4.5 7H12L8.25 11Z" fill="#6e6e6e"/></svg>
<svg class="a" style="left:676px;top:401px;" width="17" height="17" viewBox="0 0 17 17"><rect x="0.5" y="0.5" width="16" height="16" fill="#f2f2f6" stroke="#c6c6d2" stroke-width="1"/><path d="M4.5 7H12L8.25 11Z" fill="#6e6e6e"/></svg>
<svg class="a" style="left:765px;top:401px;" width="17" height="17" viewBox="0 0 17 17"><rect x="0.5" y="0.5" width="16" height="16" fill="#f2f2f6" stroke="#c6c6d2" stroke-width="1"/><path d="M4.5 7H12L8.25 11Z" fill="#6e6e6e"/></svg>
<svg class="a" style="left:805px;top:401px;" width="17" height="17" viewBox="0 0 17 17"><rect x="0.5" y="0.5" width="16" height="16" fill="#f2f2f6" stroke="#c6c6d2" stroke-width="1"/><path d="M4.5 7H12L8.25 11Z" fill="#6e6e6e"/></svg>
<svg class="a" style="left:894px;top:401px;" width="17" height="17" viewBox="0 0 17 17"><rect x="0.5" y="0.5" width="16" height="16" fill="#f2f2f6" stroke="#c6c6d2" stroke-width="1"/><path d="M4.5 7H12L8.25 11Z" fill="#6e6e6e"/></svg>
<svg class="a" style="left:934px;top:401px;" width="17" height="17" viewBox="0 0 17 17"><rect x="0.5" y="0.5" width="16" height="16" fill="#f2f2f6" stroke="#c6c6d2" stroke-width="1"/><path d="M4.5 7H12L8.25 11Z" fill="#6e6e6e"/></svg>
<svg class="a" style="left:1023px;top:401px;" width="17" height="17" viewBox="0 0 17 17"><rect x="0.5" y="0.5" width="16" height="16" fill="#f2f2f6" stroke="#c6c6d2" stroke-width="1"/><path d="M4.5 7H12L8.25 11Z" fill="#6e6e6e"/></svg>
<svg class="a" style="left:1120px;top:401px;" width="17" height="17" viewBox="0 0 17 17"><rect x="0.5" y="0.5" width="16" height="16" fill="#f2f2f6" stroke="#c6c6d2" stroke-width="1"/><path d="M4.5 7H12L8.25 11Z" fill="#6e6e6e"/></svg>
<div class="t" style="left:68.5px;top:424.00px;font-size:13.35px;color:#000;">Проект 1</div>
<div class="t" style="left:164.6px;top:424.00px;font-size:13.35px;color:#000;">Категория 1</div>
<div class="t" style="left:253.5px;top:424.63px;font-size:12.60px;color:#000;">25.03.2019</div>
<div class="t" style="left:342.4px;top:424.63px;font-size:12.60px;color:#000;">24.05.2019</div>
<div class="t" style="left:438px;top:424.63px;font-size:12.60px;color:#000;">210</div>
<div class="t" style="left:527px;top:424.63px;font-size:12.60px;color:#000;">59</div>
<div class="t" style="left:600px;width:89.5px;text-align:right;top:424.63px;font-size:12.6px;color:#000">25.03.2019</div>
<div class="t" style="left:698px;top:424.63px;font-size:12.60px;color:#000;">29.05.2019</div>
<svg class="a" style="left:785.5px;top:422px;" width="15" height="16" viewBox="0 0 15 16"><rect x="0" y="0" width="2" height="15" fill="#6d6d6d"/><path d="M3.1 0.3L13.8 4.6L3.1 8.9Z" fill="#e25b34" stroke="#c8401f" stroke-width="0.6"/></svg>
<div class="t" style="left:834px;top:424.63px;font-size:12.60px;color:#000;">300</div>
<div class="t" style="left:964px;top:424.63px;font-size:12.60px;color:#000;">64</div>
<div class="t" style="left:68.5px;top:444.00px;font-size:13.35px;color:#000;">Проект 2</div>
<div class="t" style="left:164.6px;top:444.00px;font-size:13.35px;color:#000;">Категория 2</div>
<div class="t" style="left:253.5px;top:444.63px;font-size:12.60px;color:#000;">18.04.2019</div>
<div class="t" style="left:342.4px;top:444.63px;font-size:12.60px;color:#000;">19.05.2019</div>
<div class="t" style="left:438px;top:444.63px;font-size:12.60px;color:#000;">400</div>
<div class="t" style="left:527px;top:444.63px;font-size:12.60px;color:#000;">31</div>
<div class="t" style="left:600px;width:89.5px;text-align:right;top:444.63px;font-size:12.6px;color:#000">18.04.2019</div>
<div class="t" style="left:698px;top:444.63px;font-size:12.60px;color:#000;">22.05.2019</div>
<div class="t" style="left:834px;top:444.63px;font-size:12.60px;color:#000;">390</div>
<div class="t" style="left:964px;top:444.63px;font-size:12.60px;color:#000;">34</div>
<div class="t" style="left:68.5px;top:464.00px;font-size:13.35px;color:#000;">Проект 3</div>
<div class="t" style="left:164.6px;top:464.00px;font-size:13.35px;color:#000;">Категория 1</div>
<div class="t" style="left:253.5px;top:464.63px;font-size:12.60px;color:#000;">18.02.2019</div>
<div class="t" style="left:342.4px;top:464.63px;font-size:12.60px;color:#000;">19.04.2019</div>
<div class="t" style="left:438px;top:464.63px;font-size:12.60px;color:#000;">500</div>
<div class="t" style="left:527px;top:464.63px;font-size:12.60px;color:#000;">61</div>
<div class="t" style="left:600px;width:89.5px;text-align:right;top:464.63px;font-size:12.6px;color:#000">18.02.2019</div>
<div class="t" style="left:698px;top:464.63px;font-size:12.60px;color:#000;">02.05.2019</div>
<div class="t" style="left:834px;top:464.63px;font-size:12.60px;color:#000;">500</div>
<div class="t" style="left:964px;top:464.63px;font-size:12.60px;color:#000;">74</div>
<div class="t" style="left:68.5px;top:484.00px;font-size:13.35px;color:#000;">Проект 4</div>
<div class="t" style="left:164.6px;top:484.00px;font-size:13.35px;color:#000;">Категория 2</div>
<div class="t" style="left:253.5px;top:484.63px;font-size:12.60px;color:#000;">28.02.2019</div>
<div class="t" style="left:342.4px;top:484.63px;font-size:12.60px;color:#000;">10.03.2019</div>
<div class="t" style="left:438px;top:484.63px;font-size:12.60px;color:#000;">250</div>
<div class="t" style="left:527px;top:484.63px;font-size:12.60px;color:#000;">12</div>
<div class="t" style="left:600px;width:89.5px;text-align:right;top:484.63px;font-size:12.6px;color:#000">28.02.2019</div>
<div class="t" style="left:698px;top:484.63px;font-size:12.60px;color:#000;">19.03.2019</div>
<div class="t" style="left:834px;top:484.63px;font-size:12.60px;color:#000;">276</div>
<svg class="a" style="left:914.8px;top:482px;" width="15" height="16" viewBox="0 0 15 16"><rect x="0" y="0" width="2" height="15" fill="#6d6d6d"/><path d="M3.1 0.3L13.8 4.6L3.1 8.9Z" fill="#e25b34" stroke="#c8401f" stroke-width="0.6"/></svg>
<div class="t" style="left:964px;top:484.63px;font-size:12.60px;color:#000;">21</div>
<div class="t" style="left:68.5px;top:504.00px;font-size:13.35px;color:#000;">Проект 5</div>
<div class="t" style="left:164.6px;top:504.00px;font-size:13.35px;color:#000;">Категория 3</div>
<div class="t" style="left:253.5px;top:504.63px;font-size:12.60px;color:#000;">28.02.2019</div>
<div class="t" style="left:342.4px;top:504.63px;font-size:12.60px;color:#000;">09.04.2019</div>
<div class="t" style="left:438px;top:504.63px;font-size:12.60px;color:#000;">300</div>
<div class="t" style="left:527px;top:504.63px;font-size:12.60px;color:#000;">41</div>
<div class="t" style="left:600px;width:89.5px;text-align:right;top:504.63px;font-size:12.6px;color:#000">28.02.2019</div>
<div class="t" style="left:698px;top:504.63px;font-size:12.60px;color:#000;">15.04.2019</div>
<div class="t" style="left:834px;top:504.63px;font-size:12.60px;color:#000;">310</div>
<div class="t" style="left:964px;top:504.63px;font-size:12.60px;color:#000;">47</div>
<div class="t" style="left:68.5px;top:524.00px;font-size:13.35px;color:#000;">Проект 6</div>
<div class="t" style="left:164.6px;top:524.00px;font-size:13.35px;color:#000;">Категория 4</div>
<div class="t" style="left:253.5px;top:524.63px;font-size:12.60px;color:#000;">30.03.2019</div>
<div class="t" style="left:342.4px;top:524.63px;font-size:12.60px;color:#000;">09.04.2019</div>
<div class="t" style="left:438px;top:524.63px;font-size:12.60px;color:#000;">500</div>
<div class="t" style="left:527px;top:524.63px;font-size:12.60px;color:#000;">9</div>
<div class="t" style="left:600px;width:89.5px;text-align:right;top:524.63px;font-size:12.6px;color:#000">30.03.2019</div>
<div class="t" style="left:698px;top:524.63px;font-size:12.60px;color:#000;">14.04.2019</div>
<div class="t" style="left:834px;top:524.63px;font-size:12.60px;color:#000;">510</div>
<svg class="a" style="left:914.8px;top:522px;" width="15" height="16" viewBox="0 0 15 16"><rect x="0" y="0" width="2" height="15" fill="#6d6d6d"/><path d="M3.1 0.3L13.8 4.6L3.1 8.9Z" fill="#e25b34" stroke="#c8401f" stroke-width="0.6"/></svg>
<div class="t" style="left:964px;top:524.63px;font-size:12.60px;color:#000;">14</div>
<div class="t" style="left:68.5px;top:544.00px;font-size:13.35px;color:#000;">Проект 7</div>
<div class="t" style="left:164.6px;top:544.00px;font-size:13.35px;color:#000;">Категория 5</div>
<div class="t" style="left:253.5px;top:544.63px;font-size:12.60px;color:#000;">15.04.2019</div>
<div class="t" style="left:342.4px;top:544.63px;font-size:12.60px;color:#000;">09.05.2019</div>
<div class="t" style="left:438px;top:544.63px;font-size:12.60px;color:#000;">750</div>
<div class="t" style="left:527px;top:544.63px;font-size:12.60px;color:#000;">24</div>
<div class="t" style="left:600px;width:89.5px;text-align:right;top:544.63px;font-size:12.6px;color:#000">15.04.2019</div>
<div class="t" style="left:698px;top:544.63px;font-size:12.60px;color:#000;">14.05.2019</div>
<div class="t" style="left:834px;top:544.63px;font-size:12.60px;color:#000;">790</div>
<div class="t" style="left:964px;top:544.63px;font-size:12.60px;color:#000;">29</div>
<div class="t" style="left:68.5px;top:564.00px;font-size:13.35px;color:#000;">Проект 8</div>
<div class="t" style="left:164.6px;top:564.00px;font-size:13.35px;color:#000;">Категория 2</div>
<div class="t" style="left:253.5px;top:564.63px;font-size:12.60px;color:#000;">20.04.2019</div>
<div class="t" style="left:342.4px;top:564.63px;font-size:12.60px;color:#000;">29.05.2019</div>
<div class="t" style="left:438px;top:564.63px;font-size:12.60px;color:#000;">450</div>
<div class="t" style="left:527px;top:564.63px;font-size:12.60px;color:#000;">39</div>
<div class="t" style="left:600px;width:89.5px;text-align:right;top:564.63px;font-size:12.6px;color:#000">14.04.2019</div>
<div class="t" style="left:698px;top:564.63px;font-size:12.60px;color:#000;">24.05.2019</div>
<div class="t" style="left:834px;top:564.63px;font-size:12.60px;color:#000;">430</div>
<div class="t" style="left:964px;top:564.63px;font-size:12.60px;color:#000;">40</div>
<div class="t" style="left:68.5px;top:584.00px;font-size:13.35px;color:#000;">Проект 9</div>
<div class="t" style="left:164.6px;top:584.00px;font-size:13.35px;color:#000;">Категория 4</div>
<div class="t" style="left:253.5px;top:584.63px;font-size:12.60px;color:#000;">05.02.2016</div>
<div class="t" style="left:342.4px;top:584.63px;font-size:12.60px;color:#000;">09.06.2016</div>
<div class="t" style="left:438px;top:584.63px;font-size:12.60px;color:#000;">250</div>
<div class="t" style="left:527px;top:584.63px;font-size:12.60px;color:#000;">124</div>
<div class="t" style="left:600px;width:89.5px;text-align:right;top:584.63px;font-size:12.6px;color:#000">05.03.2016</div>
<div class="t" style="left:698px;top:584.63px;font-size:12.60px;color:#000;">05.05.2016</div>
<div class="t" style="left:834px;top:584.63px;font-size:12.60px;color:#000;">200</div>
<svg class="a" style="left:914.8px;top:582px;" width="15" height="16" viewBox="0 0 15 16"><rect x="0" y="0" width="2" height="15" fill="#6d6d6d"/><path d="M3.1 0.3L13.8 4.6L3.1 8.9Z" fill="#e25b34" stroke="#c8401f" stroke-width="0.6"/></svg>
<div class="t" style="left:964px;top:584.63px;font-size:12.60px;color:#000;">60</div>
<div class="a" style="left:1144px;top:255px;width:15px;height:373px;background:#dadada"></div>
<div class="a" style="left:1144px;top:240px;width:15px;height:15px;background:#fff;border:1px solid #c6c6c6"></div>
<svg class="a" style="left:1147px;top:245px;" width="9" height="5" viewBox="0 0 9 5"><path d="M0 4.5H9L4.5 0Z" fill="#777"/></svg>
<div class="a" style="left:1144px;top:276px;width:15px;height:330px;background:#fff;border:1px solid #a8a8a8"></div>
<div class="a" style="left:1144px;top:627px;width:15px;height:15px;background:#fff;border:1px solid #c6c6c6"></div>
<svg class="a" style="left:1147px;top:633px;" width="9" height="5" viewBox="0 0 9 5"><path d="M0 0H9L4.5 4.5Z" fill="#777"/></svg>
<div class="a" style="left:31px;top:643px;width:1131px;height:27px;background:#e6e6e6"></div>
<div class="a" style="left:31px;top:670px;width:1131px;height:1px;background:#c8c8c8"></div>
<svg class="a" style="left:56px;top:650px;" width="8" height="10" viewBox="0 0 8 10"><path d="M6.5 0.5V9.5L1 5Z" fill="#c6c6c6"/></svg>
<svg class="a" style="left:85px;top:650px;" width="8" height="10" viewBox="0 0 8 10"><path d="M1.5 0.5V9.5L7 5Z" fill="#c6c6c6"/></svg>
<div class="a" style="left:131px;top:642px;width:60px;height:25px;background:#fff;border-left:1px solid #ababab;border-right:1px solid #ababab"></div>
<div class="a" style="left:131px;top:665px;width:60px;height:2px;background:#217346"></div>
<div class="t" style="left:143.2px;top:649.57px;font-size:12.68px;color:#217346;font-weight:bold;transform:scaleX(0.9346);transform-origin:0 0;">Лист1</div>
<svg class="a" style="left:223px;top:647px;" width="18" height="18" viewBox="0 0 18 18"><circle cx="9" cy="9" r="7.7" fill="none" stroke="#777" stroke-width="1.1"/><path d="M9 4.8V13.2M4.8 9H13.2" stroke="#777" stroke-width="1.7"/></svg>
<div class="a" style="left:709px;top:651px;width:2px;height:2px;background:#a8a8a8"></div>
<div class="a" style="left:709px;top:655px;width:2px;height:2px;background:#a8a8a8"></div>
<div class="a" style="left:709px;top:659px;width:2px;height:2px;background:#a8a8a8"></div>
<div class="a" style="left:741px;top:649px;width:30px;height:15px;background:#d6d6d6"></div>
<div class="a" style="left:726px;top:649px;width:15px;height:15px;background:#fff;border:1px solid #ababab"></div>
<svg class="a" style="left:730px;top:652px;" width="6" height="9" viewBox="0 0 6 9"><path d="M5 0.5V8.5L0.5 4.5Z" fill="#555"/></svg>
<div class="a" style="left:771px;top:649px;width:324px;height:15px;background:#fff;border:1px solid #ababab"></div>
<div class="a" style="left:1095px;top:649px;width:31px;height:15px;background:#d6d6d6"></div>
<div class="a" style="left:1126px;top:649px;width:15px;height:15px;background:#fff;border:1px solid #ababab"></div>
<svg class="a" style="left:1131px;top:652px;" width="6" height="9" viewBox="0 0 6 9"><path d="M1 0.5V8.5L5.5 4.5Z" fill="#555"/></svg>
<div class="a" style="left:862px;top:671px;width:38px;height:20px;background:#c8c6c4"></div>
<svg class="a" style="left:874px;top:674px;" width="13" height="13" viewBox="0 0 13 13"><rect x="0.5" y="0.5" width="12" height="12" fill="none" stroke="#666" stroke-width="1"/><path d="M4.5 0.5V12.5M8.5 0.5V12.5M0.5 4.5H12.5M0.5 8.5H12.5" stroke="#666" stroke-width="1"/></svg>
<svg class="a" style="left:912px;top:674px;" width="14" height="13" viewBox="0 0 14 13"><rect x="0.5" y="0.5" width="13" height="12" fill="none" stroke="#666" stroke-width="1"/><rect x="3.5" y="2.5" width="7" height="8" fill="none" stroke="#666" stroke-width="1"/><path d="M5 4.5H9M5 6.5H9M5 8.5H9" stroke="#666" stroke-width="0.9"/></svg>
<svg class="a" style="left:950px;top:674px;" width="14" height="13" viewBox="0 0 14 13"><path d="M0.5 12.5H13.5V0.5H0.5Z M4.5 0.5V7.5H0.5 M4.5 7.5H8.5V0.5" fill="none" stroke="#666" stroke-width="1"/></svg>
<div class="a" style="left:981px;top:680px;width:6px;height:2px;background:#555"></div>
<div class="a" style="left:991px;top:681px;width:100px;height:1px;background:#a8a8a8"></div>
<div class="a" style="left:1039px;top:675px;width:5px;height:11px;background:#707070"></div>
<svg class="a" style="left:1094px;top:676px;" width="9" height="9" viewBox="0 0 9 9"><path d="M4.5 0V9M0 4.5H9" stroke="#555" stroke-width="1.8"/></svg>
<div class="t" style="left:1113.6px;top:674.22px;font-size:11.56px;color:#444;transform:scaleX(0.9346);transform-origin:0 0;">100 %</div>
<div class="a" style="left:728px;top:147px;width:142px;height:20px;background:#c8c6c4"></div>
<svg class="a" style="left:730px;top:150px;" width="18" height="16" viewBox="0 0 18 16"><rect x="1" y="1.5" width="16" height="13" fill="#fff"/><rect x="7" y="1.5" width="10" height="5" fill="#8cc4ee"/><rect x="1" y="6.5" width="6" height="8" fill="#8cc4ee"/><path d="M7 1.5H16.5V14.5H1.5V7" fill="none" stroke="#444" stroke-width="1"/><path d="M1.5 6.5H16.5M1.5 10.5H16.5M12 1.5V14.5M7 1.5V14.5" stroke="#444" stroke-width="1"/><path d="M7 1.5H16.5V6.5H7Z M1.5 6.5H7V14.5H1.5Z M1.5 10.5H7M12 1.5V6.5" fill="none" stroke="#1e6fc2" stroke-width="1"/><circle cx="4" cy="3.6" r="4" fill="#c8c6c4"/><path d="M4 0.2V7M1.1 1.9L6.9 5.3M1.1 5.3L6.9 1.9" stroke="#3a96dd" stroke-width="1.2"/></svg>
<div class="t" style="left:750px;top:152.27px;font-size:12.68px;color:#262626;transform:scaleX(0.9346);transform-origin:0 0;">Закрепить области</div>
<svg class="a" style="left:858px;top:158px;" width="6" height="4" viewBox="0 0 6 4"><path d="M0 0H6L3 3.5Z" fill="#555"/></svg>
<div class="a" style="left:729px;top:167px;width:315px;height:159px;background:#fff;border:1px solid #c6c6c6;box-shadow:2px 3px 5px rgba(0,0,0,.18)"></div>
<div class="a" style="left:730px;top:172px;width:313px;height:49px;background:#c8c8c8"></div>
<svg class="a" style="left:732px;top:180px;" width="40" height="34" viewBox="0 0 40 34"><rect x="6" y="6" width="28" height="22" fill="#fff"/><rect x="6" y="6" width="28" height="7" fill="#8cc4ee"/><rect x="6" y="6" width="9" height="22" fill="#8cc4ee"/><path d="M6.5 6V28M33.5 6V28M6 6.5H34M6 27.5H34M15.5 6V28M24.5 6V28M6 13.5H34M6 20.5H34" stroke="#3c3c3c" stroke-width="1"/><path d="M6.5 13.5V6.5H33.5V13.5H6.5M15.5 6V13M24.5 6V13" fill="none" stroke="#1e6fc2" stroke-width="1.3"/><path d="M6.5 6.5V27.5H15.5V6.5M6 13.5H15M6 20.5H15" fill="none" stroke="#1e6fc2" stroke-width="1.3"/><circle cx="9.3" cy="6.3" r="6.6" fill="#c8c8c8"/><path d="M9.30 6.30L9.30 11.60M9.30 10.43L8.00 11.53M9.30 10.43L10.60 11.53M9.30 6.30L13.89 8.95M12.88 8.37L13.18 10.04M12.88 8.37L14.48 7.79M9.30 6.30L4.71 8.95M5.72 8.37L4.12 7.79M5.72 8.37L5.42 10.04M9.30 6.30L9.30 1.00M9.30 2.17L10.60 1.07M9.30 2.17L8.00 1.07M9.30 6.30L4.71 3.65M5.72 4.23L5.42 2.56M5.72 4.23L4.12 4.81M9.30 6.30L13.89 3.65M12.88 4.23L14.48 4.81M12.88 4.23L13.18 2.56" stroke="#2f8ede" stroke-width="1.35" stroke-linecap="round"/></svg>
<svg class="a" style="left:732px;top:231px;" width="40" height="34" viewBox="0 0 40 34"><rect x="6" y="6" width="28" height="22" fill="#fff"/><rect x="6" y="6" width="28" height="7" fill="#8cc4ee"/><path d="M6.5 6V28M33.5 6V28M6 6.5H34M6 27.5H34M15.5 6V28M24.5 6V28M6 13.5H34M6 20.5H34" stroke="#3c3c3c" stroke-width="1"/><path d="M6.5 13.5V6.5H33.5V13.5H6.5M15.5 6V13M24.5 6V13" fill="none" stroke="#1e6fc2" stroke-width="1.3"/><circle cx="9.3" cy="6.3" r="6.6" fill="#fff"/><path d="M9.30 6.30L9.30 11.60M9.30 10.43L8.00 11.53M9.30 10.43L10.60 11.53M9.30 6.30L13.89 8.95M12.88 8.37L13.18 10.04M12.88 8.37L14.48 7.79M9.30 6.30L4.71 8.95M5.72 8.37L4.12 7.79M5.72 8.37L5.42 10.04M9.30 6.30L9.30 1.00M9.30 2.17L10.60 1.07M9.30 2.17L8.00 1.07M9.30 6.30L4.71 3.65M5.72 4.23L5.42 2.56M5.72 4.23L4.12 4.81M9.30 6.30L13.89 3.65M12.88 4.23L14.48 4.81M12.88 4.23L13.18 2.56" stroke="#2f8ede" stroke-width="1.35" stroke-linecap="round"/></svg>
<svg class="a" style="left:732px;top:282px;" width="40" height="34" viewBox="0 0 40 34"><rect x="6" y="6" width="28" height="22" fill="#fff"/><rect x="6" y="6" width="9" height="22" fill="#8cc4ee"/><path d="M6.5 6V28M33.5 6V28M6 6.5H34M6 27.5H34M15.5 6V28M24.5 6V28M6 13.5H34M6 20.5H34" stroke="#3c3c3c" stroke-width="1"/><path d="M6.5 6.5V27.5H15.5V6.5M6 13.5H15M6 20.5H15" fill="none" stroke="#1e6fc2" stroke-width="1.3"/><circle cx="9.3" cy="6.3" r="6.6" fill="#fff"/><path d="M9.30 6.30L9.30 11.60M9.30 10.43L8.00 11.53M9.30 10.43L10.60 11.53M9.30 6.30L13.89 8.95M12.88 8.37L13.18 10.04M12.88 8.37L14.48 7.79M9.30 6.30L4.71 8.95M5.72 8.37L4.12 7.79M5.72 8.37L5.42 10.04M9.30 6.30L9.30 1.00M9.30 2.17L10.60 1.07M9.30 2.17L8.00 1.07M9.30 6.30L4.71 3.65M5.72 4.23L5.42 2.56M5.72 4.23L4.12 4.81M9.30 6.30L13.89 3.65M12.88 4.23L14.48 4.81M12.88 4.23L13.18 2.56" stroke="#2f8ede" stroke-width="1.35" stroke-linecap="round"/></svg>
<div class="t" style="left:781.9px;top:176.35px;font-size:12.47px;color:#262626;font-weight:bold;transform:scaleX(0.9346);transform-origin:0 0;">Снять <u>з</u>акрепление областей</div>
<div class="t" style="left:781.9px;top:192.77px;font-size:12.68px;color:#444;transform:scaleX(0.9346);transform-origin:0 0;">Ранее закрепленные строки и столбцы станут</div>
<div class="t" style="left:781.9px;top:207.47px;font-size:12.68px;color:#444;transform:scaleX(0.9346);transform-origin:0 0;">прокручиваться вместе с остальным листом.</div>
<div class="t" style="left:781.9px;top:227.35px;font-size:12.47px;color:#3a3a3a;font-weight:bold;transform:scaleX(0.9346);transform-origin:0 0;">Закрепить вер<u>х</u>нюю строку</div>
<div class="t" style="left:781.9px;top:243.67px;font-size:12.68px;color:#444;transform:scaleX(0.9346);transform-origin:0 0;">Верхняя строка всегда будет видна на экране</div>
<div class="t" style="left:781.9px;top:258.37px;font-size:12.68px;color:#444;transform:scaleX(0.9346);transform-origin:0 0;">во время прокрутки листа.</div>
<div class="t" style="left:781.9px;top:277.65px;font-size:12.47px;color:#3a3a3a;font-weight:bold;transform:scaleX(0.9346);transform-origin:0 0;">Закрепить первы<u>й</u> столбец</div>
<div class="t" style="left:781.9px;top:294.37px;font-size:12.68px;color:#444;transform:scaleX(0.9346);transform-origin:0 0;">Первый столбец всегда будет виден на</div>
<div class="t" style="left:781.9px;top:309.27px;font-size:12.68px;color:#444;transform:scaleX(0.9346);transform-origin:0 0;">экране во время прокрутки листа.</div>
<div class="a" style="left:680.5px;top:55.5px;width:69.0px;height:44.5px;border:3.3px solid #f00;border-radius:10px;box-shadow:0 0 0 1.2px #fff, inset 0 0 0 1.6px #fff, inset 2px 3px 4px 1px rgba(0,0,0,.35), 1px 2px 3px 1px rgba(0,0,0,.35)"></div>
<div class="a" style="left:714.3px;top:137.9px;width:164.70000000000005px;height:34.400000000000006px;border:3.3px solid #f00;border-radius:9px;box-shadow:0 0 0 1.2px #fff, inset 0 0 0 1.6px #fff, inset 2px 3px 4px 1px rgba(0,0,0,.35), 1px 2px 3px 1px rgba(0,0,0,.35)"></div>
<div class="a" style="left:727.8px;top:167.8px;width:322.4000000000001px;height:59.099999999999994px;border:3.3px solid #f00;border-radius:9px;box-shadow:0 0 0 1.2px #fff, inset 0 0 0 1.6px #fff, inset 2px 3px 4px 1px rgba(0,0,0,.35), 1px 2px 3px 1px rgba(0,0,0,.35)"></div>
<svg class="a" style="left:743.5px;top:55.5px;" width="50" height="50" viewBox="0 0 50 50"><defs><radialGradient id="rg1" cx="50%" cy="92%" r="80%" fx="50%" fy="95%"><stop offset="0" stop-color="#ffb892"/><stop offset="0.28" stop-color="#fa7a4c"/><stop offset="0.58" stop-color="#f5491c"/><stop offset="0.85" stop-color="#f2360a"/><stop offset="1" stop-color="#ea2e04"/></radialGradient><linearGradient id="gl1" x1="0" y1="0" x2="0" y2="1"><stop offset="0" stop-color="#fff" stop-opacity="0.42"/><stop offset="1" stop-color="#fff" stop-opacity="0.18"/></linearGradient></defs><circle cx="25.4" cy="25.8" r="22.9" fill="rgba(0,0,0,0.15)"/><circle cx="25" cy="25" r="22.9" fill="url(#rg1)" stroke="#dc3004" stroke-width="0.8"/><ellipse cx="25" cy="14.2" rx="17.5" ry="9.5" fill="url(#gl1)"/><path d="M23.2 12.6H29.7V36.9H23.2V21.3L18.3 22.6V16.5Q21 15.4 23.2 12.6Z" fill="#fff" stroke="#111" stroke-width="1.7" stroke-linejoin="round"/></svg>
<svg class="a" style="left:668.2px;top:127.4px;" width="50" height="50" viewBox="0 0 50 50"><defs><radialGradient id="rg2" cx="50%" cy="92%" r="80%" fx="50%" fy="95%"><stop offset="0" stop-color="#ffb892"/><stop offset="0.28" stop-color="#fa7a4c"/><stop offset="0.58" stop-color="#f5491c"/><stop offset="0.85" stop-color="#f2360a"/><stop offset="1" stop-color="#ea2e04"/></radialGradient><linearGradient id="gl2" x1="0" y1="0" x2="0" y2="1"><stop offset="0" stop-color="#fff" stop-opacity="0.42"/><stop offset="1" stop-color="#fff" stop-opacity="0.18"/></linearGradient></defs><circle cx="25.4" cy="25.8" r="22.9" fill="rgba(0,0,0,0.15)"/><circle cx="25" cy="25" r="22.9" fill="url(#rg2)" stroke="#dc3004" stroke-width="0.8"/><ellipse cx="25" cy="14.2" rx="17.5" ry="9.5" fill="url(#gl2)"/><text x="25" y="36.6" text-anchor="middle" font-family="Liberation Sans" font-weight="bold" font-size="32" fill="#fff" stroke="#111" stroke-width="3" paint-order="stroke" stroke-linejoin="round">2</text></svg>
<svg class="a" style="left:1043.5px;top:172.6px;" width="50" height="50" viewBox="0 0 50 50"><defs><radialGradient id="rg3" cx="50%" cy="92%" r="80%" fx="50%" fy="95%"><stop offset="0" stop-color="#ffb892"/><stop offset="0.28" stop-color="#fa7a4c"/><stop offset="0.58" stop-color="#f5491c"/><stop offset="0.85" stop-color="#f2360a"/><stop offset="1" stop-color="#ea2e04"/></radialGradient><linearGradient id="gl3" x1="0" y1="0" x2="0" y2="1"><stop offset="0" stop-color="#fff" stop-opacity="0.42"/><stop offset="1" stop-color="#fff" stop-opacity="0.18"/></linearGradient></defs><circle cx="25.4" cy="25.8" r="22.9" fill="rgba(0,0,0,0.15)"/><circle cx="25" cy="25" r="22.9" fill="url(#rg3)" stroke="#dc3004" stroke-width="0.8"/><ellipse cx="25" cy="14.2" rx="17.5" ry="9.5" fill="url(#gl3)"/><text x="25" y="36.6" text-anchor="middle" font-family="Liberation Sans" font-weight="bold" font-size="32" fill="#fff" stroke="#111" stroke-width="3" paint-order="stroke" stroke-linejoin="round">3</text></svg>
</body></html>
